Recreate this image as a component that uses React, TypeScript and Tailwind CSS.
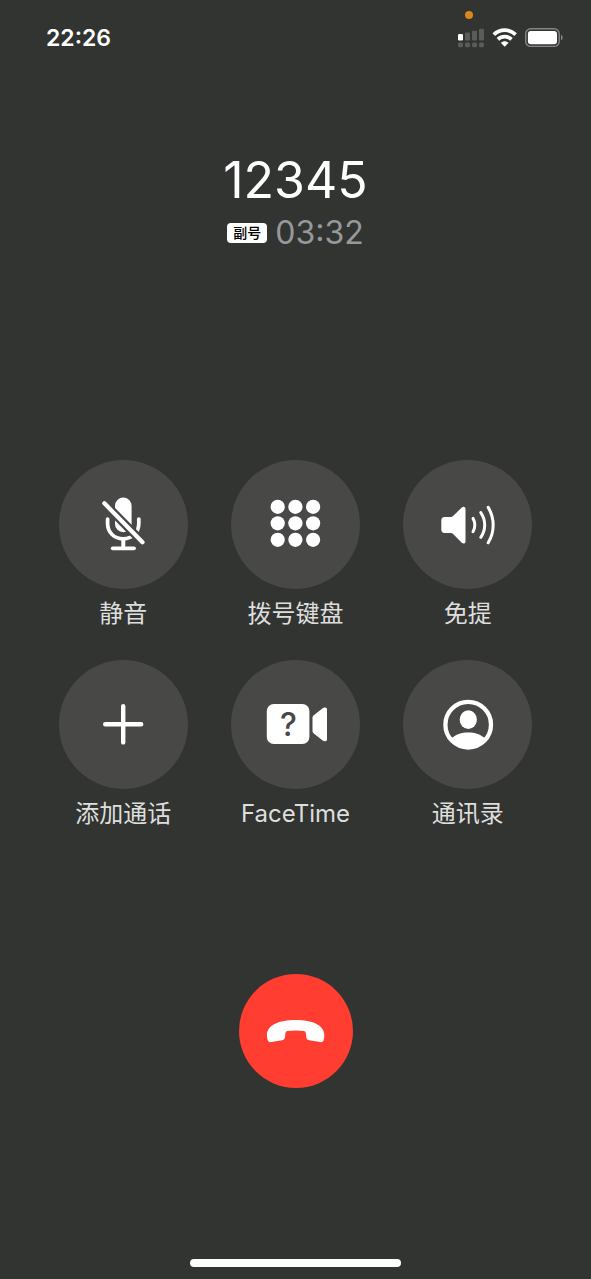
import type { ReactNode } from "react";

function MuteIcon() {
  return (
    <svg viewBox="0 0 64 64" className="size-16" fill="none" stroke="#fff" strokeLinecap="round" aria-hidden="true">
      <mask id="mute-gap" maskUnits="userSpaceOnUse" x="0" y="0" width="64" height="64">
        <rect width="64" height="64" fill="#fff" stroke="none" />
        <path d="M8 6 57 55.6" stroke="#000" strokeWidth="8.8" />
      </mask>
      <g mask="url(#mute-gap)">
        <rect x="24" y="5.6" width="16.6" height="34.6" rx="8.3" fill="#fff" stroke="none" />
        <path d="M16.6 27v4.5c0 9 6.600 15.300 15.600 15.300S47.800 40.500 47.800 31.500V27" strokeWidth="3.700" />
      </g>
      <path d="M32.300 47v9" strokeWidth="4" strokeLinecap="butt" />
      <path d="M21.700 56.300h21.300" strokeWidth="3.800" />
      <path d="M13.400 11.300 51.500 50.300" strokeWidth="4.200" />
    </svg>
  );
}

function KeypadIcon() {
  return (
    <svg viewBox="0 0 64 64" className="size-16" fill="#fff" aria-hidden="true">
      {[14.8, 31.3, 47.8].map((cy) => [14.7, 32.4, 50.1].map((cx) => <circle key={`${cx}-${cy}`} cx={cx} cy={cy} r="7.1" />))}
    </svg>
  );
}

function SpeakerIcon() {
  return (
    <svg viewBox="0 0 64 64" className="size-16" fill="none" stroke="#fff" strokeLinecap="round" aria-hidden="true">
      <path
        d="M8.500 25h6.200c1 0 1.700-.3 2.400-.9l8.700-8.700c1.700-1.500 3.700-.7 3.700 1.400v32.600c0 2.100-2 2.900-3.700 1.400l-8.700-8.800c-.7-.6-1.400-.9-2.400-.9H8.500C6.400 41.100 5.300 39.700 5.300 37.600v-9.100C5.300 26.400 6.400 25 8.500 25z"
        fill="#fff"
        stroke="none"
      />
      <path d="M37 26.400c2.400 3.800 2.400 9.400 0 13.300" strokeWidth="3" />
      <path d="M44.800 20.600c5.200 7.500 5.200 17.200 0 24.700" strokeWidth="3" />
      <path d="M52.200 15.400c6.600 10.700 6.600 24.700 0 35.400" strokeWidth="3" />
    </svg>
  );
}

function PlusIcon() {
  return (
    <svg viewBox="0 0 64 64" className="size-16" fill="none" stroke="#fff" strokeWidth="4.4" strokeLinecap="round" aria-hidden="true">
      <path d="M32.200 14.200v36.200M14.200 32.300h36" />
    </svg>
  );
}

function VideoIcon() {
  return (
    <svg viewBox="0 0 64 64" className="size-16" fill="#fff" aria-hidden="true">
      <rect x="3.800" y="12" width="42.600" height="40" rx="7" />
      <path d="M50.800 23.200 59.700 16.300c2-1.500 4.600-.6 4.600 1.900v28.500c0 2.500-2.600 3.400-4.600 1.900l-8.900-7.200c-.9-.7-1.300-1.500-1.300-2.600V25.800c0-1.100.4-1.900 1.300-2.600z" />
      <text x="25.500" y="43.600" textAnchor="middle" fill="#484947" className="font-['Inter',sans-serif] text-[32px] font-medium">
        ?
      </text>
    </svg>
  );
}

function ContactsIcon() {
  return (
    <svg viewBox="0 0 64 64" className="size-16" fill="#fff" aria-hidden="true">
      <circle cx="32.200" cy="32.700" r="22.800" fill="none" stroke="#fff" strokeWidth="4.300" />
      <ellipse cx="32.300" cy="27.700" rx="8.600" ry="9.400" />
      <path d="M15.200 46.500C19.500 42.300 25.500 40.400 32.200 40.400s12.800 1.900 17.100 6.100C45 52.300 39 56 32.200 56s-12.900-3.700-17-9.500z" />
    </svg>
  );
}

function HangUpIcon() {
  return (
    <svg viewBox="0 0 64 64" className="size-16" fill="#fff" aria-hidden="true">
      <path d="M31.700 21C48 21 60.300 25.800 60.300 36.200c0 1.500-.1 3-.5 4.400-.5 2-1.700 2.800-3.700 2.500l-10.900-1.900c-1.900-.3-2.700-1.200-2.900-3.100l-.4-3.500c-.2-1.600-.8-2.300-2.300-2.600-4.800-.8-11.200-.8-15.900 0-1.500.3-2.100 1-2.300 2.600l-.4 3.500c-.2 1.900-1 2.800-2.900 3.100L7.300 43.100c-2 .3-3.200-.5-3.800-2.500-.4-1.400-.6-2.900-.6-4.400C2.900 25.800 15.400 21 31.700 21z" />
    </svg>
  );
}

function SignalIcon() {
  return (
    <svg viewBox="0 0 28 22" className="h-[22px] w-7" fill="#5b5c5a" aria-hidden="true">
      <rect x="1" y="7" width="5" height="6.500" rx="1.300" fill="#fff" />
      <rect x="8" y="5.500" width="5" height="8" rx="1.300" />
      <rect x="15" y="3.700" width="5" height="9.800" rx="1.300" />
      <rect x="22" y="1.700" width="5" height="11.800" rx="1.300" />
      {[1, 8, 15, 22].map((x) => (
        <rect key={x} x={x} y="15.500" width="5" height="4.800" rx="1.600" />
      ))}
    </svg>
  );
}

function WifiIcon() {
  return (
    <svg viewBox="0 0 26 20" className="h-5 w-[26px]" fill="none" stroke="#fff" aria-hidden="true">
      <path d="M1.800 6.700C8 .7 17.400.7 23.600 6.700" strokeWidth="3.800" />
      <path d="M5.900 11.400c3.900-3.700 9.700-3.700 13.600 0" strokeWidth="3.700" />
      <path d="M12.700 18.700l-3.900-3.900c2.200-2.100 5.600-2.100 7.800 0z" fill="#fff" stroke="none" />
    </svg>
  );
}

function BatteryIcon() {
  return (
    <svg viewBox="0 0 39 20" className="h-5 w-[39px]" fill="none" aria-hidden="true">
      <rect x=".7" y=".7" width="33.500" height="17.700" rx="5" stroke="#858684" strokeWidth="1.400" />
      <rect x="2.900" y="2.900" width="29.100" height="13.300" rx="3" fill="#fff" />
      <path d="M36 6.700v5.600c1.100-.5 1.700-1.500 1.700-2.800s-.6-2.300-1.700-2.800z" fill="#858684" />
    </svg>
  );
}

function CallAction({ label, icon }: { label: string; icon: ReactNode }) {
  return (
    <button type="button" className="flex flex-col items-center">
      <span className="flex size-[129px] items-start justify-center rounded-full bg-[#484947] pt-8">{icon}</span>
      <span className="mt-2 text-2xl leading-[34px] font-normal whitespace-nowrap text-[#dededd]">{label}</span>
    </button>
  );
}

export default function App() {
  return (
    <div className="flex min-h-screen flex-col bg-[#323431] font-['Inter','Noto_Sans_CJK_SC',sans-serif] text-white">
      <header className="flex h-[72px] items-center justify-between pr-[27px] pl-[46px]">
        <time className="pt-1 text-[23px] leading-7 font-semibold">22:26</time>
        <div className="flex items-center gap-[7px] pt-1">
          <div className="relative">
            <SignalIcon />
            <span className="absolute bottom-full left-2 mb-2 size-2 rounded-full bg-[#d9861c]" />
          </div>
          <WifiIcon />
          <BatteryIcon />
        </div>
      </header>

      <main className="flex flex-1 flex-col items-center">
        <h1 className="mt-[76px] text-[50px] leading-[64px] font-normal">12345</h1>
        <div className="mt-[3px] flex items-center gap-2">
          <span className="rounded-[4px] bg-white px-[6px] text-sm leading-5 font-medium text-black">副号</span>
          <span className="text-[32px] leading-9 font-normal text-[#98989c]">03:32</span>
        </div>

        <div className="mt-[209px] grid w-full grid-cols-3 justify-items-center gap-y-[29px] px-[37px]">
          <CallAction label="静音" icon={<MuteIcon />} />
          <CallAction label="拨号键盘" icon={<KeypadIcon />} />
          <CallAction label="免提" icon={<SpeakerIcon />} />
          <CallAction label="添加通话" icon={<PlusIcon />} />
          <CallAction label="FaceTime" icon={<VideoIcon />} />
          <CallAction label="通讯录" icon={<ContactsIcon />} />
        </div>

        <button
          type="button"
          aria-label="挂断"
          className="mt-[143px] flex size-[114px] items-center justify-center rounded-full bg-[#ff3d30]"
        >
          <HangUpIcon />
        </button>
      </main>

      <footer className="flex justify-center pb-3">
        <div className="h-2 w-[211px] rounded-full bg-white" />
      </footer>
    </div>
  );
}
